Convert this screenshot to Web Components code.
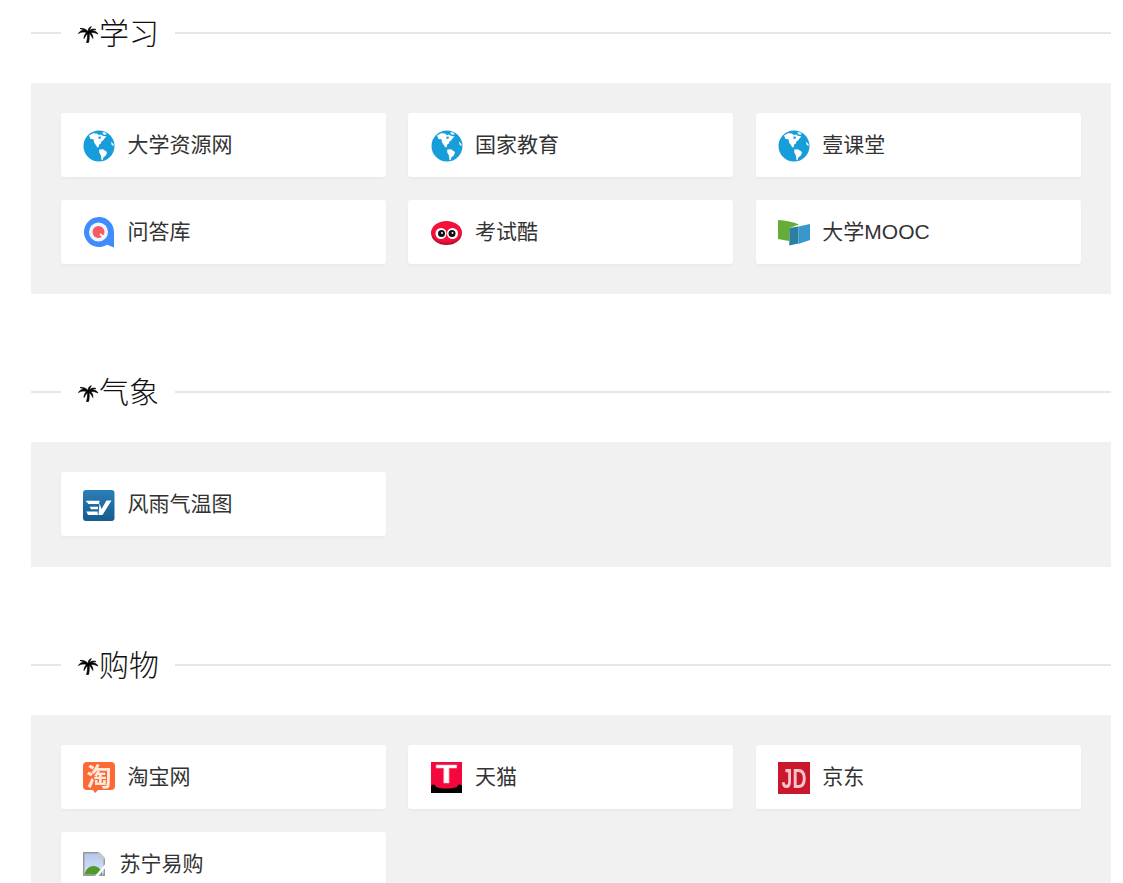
<!DOCTYPE html>
<html lang="zh">
<head>
<meta charset="utf-8">
<title>导航</title>
<style>
  html { overflow: hidden; }
  body { margin: 0; padding: 13px 12px 0 31px; background: #fff; font-family: "Liberation Sans", "Noto Sans CJK SC", sans-serif; }
</style>
</head>
<body>
<nav-section title="学习">
  <nav-card label="大学资源网" icon="globe"></nav-card>
  <nav-card label="国家教育" icon="globe"></nav-card>
  <nav-card label="壹课堂" icon="globe"></nav-card>
  <nav-card label="问答库" icon="wenda"></nav-card>
  <nav-card label="考试酷" icon="kaoshi"></nav-card>
  <nav-card label="大学MOOC" icon="mooc"></nav-card>
</nav-section>
<nav-section title="气象">
  <nav-card label="风雨气温图" icon="weather"></nav-card>
</nav-section>
<nav-section title="购物">
  <nav-card label="淘宝网" icon="taobao"></nav-card>
  <nav-card label="天猫" icon="tmall"></nav-card>
  <nav-card label="京东" icon="jd"></nav-card>
  <nav-card label="苏宁易购" icon="broken"></nav-card>
</nav-section>

<script>
// Icons, all on a 32x32 box except the broken image one
const ICONS = {
  globe: `<svg width="32" height="32" viewBox="0 0 32 32">
    <circle cx="16" cy="17" r="15.500" fill="#189ddb"/>
    <path fill="#fff" d="M6 6.500L10 4.200l4 .4 1.500 1.400 2.500-.4 1.800 1.200 3.700.8-1.800 1.600-1.400 2-1.800 1.200-.6 2-1.700 1.200-.5 2.300-1.300.6-1.400-2.300-1.800-2.500-.7-3.400L7.500 10z"/>
    <path fill="#189ddb" d="M15.500 7.500l2.500.3-.5 2-2 .2z"/>
    <path fill="#fff" d="M19 3.200l3.200.4 1.600 1.600-3 .5zM16.200 20.500l3.800-.3 4 2.800-.8 3-2.800 2.600-.9 2.700-1-.2-.6-4.600-1.700-3.200zM28 12.500l2.400 2.500.3 2-2-1z"/>
  </svg>`,
  wenda: `<svg width="32" height="32" viewBox="0 0 32 32">
    <path fill="#3f8cfb" d="M16 1a15 15 0 1 0 8 27.700l7 2.800V16A15 15 0 0 0 16 1z"/>
    <circle cx="15.500" cy="16" r="9.500" fill="#eef4ff"/>
    <circle cx="15.500" cy="16" r="6" fill="#f9595f"/>
    <path d="M17 18l3.500 3" stroke="#fff" stroke-width="2"/>
  </svg>`,
  kaoshi: `<svg width="32" height="32" viewBox="0 0 32 32">
    <defs><radialGradient id="kr" cx=".5" cy=".4" r=".62">
      <stop offset=".75" stop-color="#f3113c"/><stop offset="1" stop-color="#8d0a22"/>
    </radialGradient></defs>
    <ellipse cx="15.500" cy="17" rx="15.500" ry="12" fill="url(#kr)"/>
    <circle cx="10" cy="17.500" r="5.500" fill="#fff"/><circle cx="21.500" cy="17.500" r="5.500" fill="#fff"/>
    <circle cx="10.500" cy="17.500" r="3.500" fill="#111"/><circle cx="21" cy="17.500" r="3.500" fill="#111"/>
    <circle cx="11" cy="17" r=".9" fill="#fff"/><circle cx="21.500" cy="17" r=".9" fill="#fff"/>
  </svg>`,
  mooc: `<svg width="32" height="32" viewBox="0 0 32 32">
    <path fill="#66ad38" d="M0 4q12 .5 21 4.500l-9.500 3.500-.5 13L0 23z"/>
    <path fill="#2b7f9f" d="M11.300 12l9-1.500v17l-9 2z"/>
    <path fill="#3a97cb" d="M20.300 10.500L32 8v16l-11.700 4z"/>
  </svg>`,
  weather: `<svg width="32" height="32" viewBox="0 0 32 32">
    <defs><linearGradient id="wb" x1="0" y1="0" x2="0" y2="1">
      <stop offset="0" stop-color="#2a7fb8"/><stop offset="1" stop-color="#155b8e"/>
    </linearGradient></defs>
    <rect y="2" width="31.500" height="31" rx="3" fill="url(#wb)"/>
    <path fill="#fff" d="M2.600 12.700H16.700L15.700 16H5.500zM6.600 18.700H15v2.600H8zM3.300 23.600H14.500L15 27H5zM16.500 15l2 6 5-8.500h5L19.500 27h-4z"/>
  </svg>`,
  taobao: `<svg width="32" height="32" viewBox="0 0 32 32">
    <path fill="#fb6a34" d="M4 1h24a4 4 0 0 1 4 4v20a4 4 0 0 1-4 4H15l-3 3-2-3H4a4 4 0 0 1-4-4V5a4 4 0 0 1 4-4z"/>
    <text x="16" y="24.500" text-anchor="middle" font-size="25" font-weight="700" fill="#ffe9dd" font-family="Noto Sans CJK SC">淘</text>
  </svg>`,
  tmall: `<svg width="32" height="32" viewBox="0 0 32 32">
    <rect y="1" width="31" height="31" fill="#f3073c"/>
    <path d="M0 25c2-2 4-2 5 1 6 2 15 2 21 0 1-3 3-3 5-1v7H0z" fill="#000"/>
    <text transform="translate(15.500 22) scale(1.400 1)" text-anchor="middle" font-size="25" font-weight="700" fill="#fff" stroke="#fbb" stroke-width=".5" font-family="Liberation Sans">T</text>
  </svg>`,
  jd: `<svg width="32" height="32" viewBox="0 0 32 32">
    <rect y="1" width="32" height="32" fill="#c9182d"/>
    <text transform="translate(16 27) scale(.72 1)" text-anchor="middle" font-size="27" font-weight="700" fill="#f9c5cb" font-family="Liberation Sans">JD</text>
  </svg>`,
  broken: `<svg width="24" height="24" viewBox="0 0 24 24">
    <defs><linearGradient id="bs" x1="0" y1="0" x2="0" y2="1">
      <stop offset="0" stop-color="#b4c8ec"/><stop offset="1" stop-color="#d9e5f8"/>
    </linearGradient></defs>
    <path fill="#999" d="M0 0h16l6 6v18H0z"/>
    <path fill="url(#bs)" d="M1.500 1.500H15V7h5.500v15.500h-19z"/>
    <path fill="#4f9a2b" d="M1.500 22.500c1-5 4.500-8.500 9-8.500s8 3.500 9 8.500z"/>
    <path d="M24 10L12 24h3.500L24 14z" fill="#fff"/>
    <path d="M16 0h-1v7h7V6z" fill="#c8c8c8"/>
  </svg>`
};

// Section: title between two rules, cards in a grey panel
class NavSection extends HTMLElement {
  constructor() {
    super();
    const shadow = this.attachShadow({mode: 'open'});
    shadow.innerHTML = `
      <style>
        :host { display: block; margin-bottom: 77.9px; }
        .head { display: flex; align-items: center; height: 40px; margin-bottom: 30px; }
        .rule { height: 2px; background: #e6e6e6; width: 30px; }
        .rule.grow { flex: 1; }
        .title { display: flex; align-items: center; padding: 0 16px; font-size: 30px; font-weight: 300; line-height: 40px; color: #111; }
        .title span { padding-top: 2px; }
        .palm { width: 22px; height: 22px; flex: none; }
        .panel { background: #f1f1f1; padding: 30px; display: grid; grid-template-columns: repeat(3, 325px); gap: 22.6px 22.4px; }
      </style>
      <div class="head">
        <div class="rule"></div>
        <div class="title">
          <svg class="palm" viewBox="0 0 22 22">
            <path fill="#000" stroke="#000" stroke-width=".7" d="M11 9.500c-2-2.500-5-3.500-8-3l4.500 1.500C5 8 2.500 9.500 1.500 11.500 4 10 7 9.700 9.500 10.500 8 12 7 14 7 16.500c1-2 2.200-3.700 3.500-5 .2 3 0 6-1 9h2c.8-3 .8-6 .6-9 1.600 1.200 3 3 3.700 5 .3-2.500-.5-4.500-2.300-6 2.500-.2 5 .2 7.500 1.500-1.200-2.300-3.700-3.400-6.500-3.200 1.500-.8 3-1.100 4.500-1.200-2-1-4.600-.7-6.500 1.400.2-1.600.8-3 1.800-4.300C12.200 5 11.300 7 11 9.500z"/>
          </svg>
          <span>${this.getAttribute('title')}</span>
        </div>
        <div class="rule grow"></div>
      </div>
      <div class="panel"><slot></slot></div>
    `;
  }
}
customElements.define('nav-section', NavSection);

// Card: link tile with an icon and a label
class NavCard extends HTMLElement {
  constructor() {
    super();
    const shadow = this.attachShadow({mode: 'open'});
    const icon = this.getAttribute('icon');
    shadow.innerHTML = `
      <style>
        :host { display: flex; align-items: center; height: 64px; margin-bottom: .4px; padding-left: 22.2px; background: #fff; border-radius: 3px; box-shadow: 0 2px 3px rgba(0,0,0,.03); font-size: 21px; color: #333; }
        .icon { display: flex; margin-right: 12.4px; flex: none; }
        .icon svg { filter: blur(.35px); overflow: visible; }
        .label { padding-bottom: 4px; }
      </style>
      <span class="icon">${ICONS[icon]}</span>
      <span class="label">${this.getAttribute('label')}</span>
    `;
  }
}
customElements.define('nav-card', NavCard);
</script>
</body>
</html>
